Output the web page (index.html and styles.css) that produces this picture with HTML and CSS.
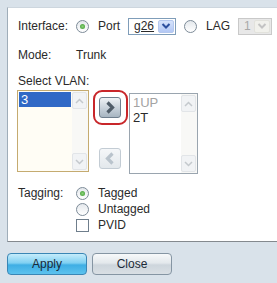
FILE: index.html
```html
<!DOCTYPE html>
<html lang="en">
<head>
  <meta charset="UTF-8">
  <title>Port VLAN Membership</title>
  <link rel="stylesheet" href="styles.css">
</head>
<body>

<div class="panel">
  <div class="row row-iface">
    <span class="label">Interface:</span>
    <span class="radio checked"></span>
    <span class="opt">Port</span>
    <span class="select">
      <span class="select-val"><u>g26</u></span>
      <span class="select-btn">
        <svg width="10" height="8" viewBox="0 0 10 8"><path d="M1.5 2 L5 5.5 L8.5 2" fill="none" stroke="#2c4f9e" stroke-width="2"/></svg>
      </span>
    </span>
    <span class="radio"></span>
    <span class="opt">LAG</span>
    <span class="select disabled">
      <span class="select-val">1</span>
      <span class="select-btn">
        <svg width="10" height="8" viewBox="0 0 10 8"><path d="M1.5 2 L5 5.5 L8.5 2" fill="none" stroke="#c3c3c3" stroke-width="2"/></svg>
      </span>
    </span>
  </div>

  <div class="row row-mode">
    <span class="label">Mode:</span>
    <span>Trunk</span>
  </div>

  <div class="row row-sel">Select VLAN:</div>

  <div class="lists">
    <div class="listbox focus">
      <div class="items">
        <div class="item selected">3</div>
      </div>
      <div class="scroll">
        <span class="sbtn"><svg width="9" height="6" viewBox="0 0 9 6"><path d="M1 5 L4.5 1.5 L8 5" fill="none" stroke="#c4c9cd" stroke-width="1.5"/></svg></span>
        <span class="sbtn"><svg width="9" height="6" viewBox="0 0 9 6"><path d="M1 1 L4.5 4.5 L8 1" fill="none" stroke="#c4c9cd" stroke-width="1.5"/></svg></span>
      </div>
    </div>

    <div class="movers">
      <div class="highlight">
        <span class="move">
          <svg width="10" height="13" viewBox="0 0 10 13"><path d="M2.5 1.5 L7.5 6.5 L2.5 11.5" fill="none" stroke="#4f5c68" stroke-width="3.2"/></svg>
        </span>
      </div>
      <span class="move off">
        <svg width="10" height="13" viewBox="0 0 10 13"><path d="M7.5 1.5 L2.5 6.5 L7.5 11.5" fill="none" stroke="#b9c3cc" stroke-width="3.2"/></svg>
      </span>
    </div>

    <div class="listbox plain">
      <div class="items">
        <div class="item grey">1UP</div>
        <div class="item">2T</div>
      </div>
      <div class="scroll">
        <span class="sbtn"><svg width="9" height="6" viewBox="0 0 9 6"><path d="M1 5 L4.5 1.5 L8 5" fill="none" stroke="#c4c9cd" stroke-width="1.5"/></svg></span>
        <span class="sbtn"><svg width="9" height="6" viewBox="0 0 9 6"><path d="M1 1 L4.5 4.5 L8 1" fill="none" stroke="#c4c9cd" stroke-width="1.5"/></svg></span>
      </div>
    </div>
  </div>

  <div class="tagging">
    <div class="row row-tag">
      <span class="label">Tagging:</span>
      <span class="radio checked"></span>
      <span class="opt">Tagged</span>
    </div>
    <div class="row row-tag">
      <span class="label"></span>
      <span class="radio"></span>
      <span class="opt">Untagged</span>
    </div>
    <div class="row row-tag">
      <span class="label"></span>
      <span class="check"></span>
      <span class="opt">PVID</span>
    </div>
  </div>
</div>

<div class="actions">
  <button class="btn apply">Apply</button>
  <button class="btn close">Close</button>
</div>

</body>
</html>
```

FILE: styles.css
```css
body {
  margin: 0;
  background: #d9e2ea;
  font-family: 'Liberation Sans', Arial, sans-serif;
  font-size: 12px;
  color: #2a2a2a;
}

.panel {
  margin: 7px 0 0 7px;
  height: 235px;
  box-sizing: border-box;
  padding: 8px 0 0 10px;
  background: #fff;
  border-left: 1px solid #9fadb9;
  border-top: 1px solid #cdd6de;
  border-bottom: 1px solid #84898e;
}

.row {
  display: flex;
  align-items: center;
}

.label {
  width: 58px;
  flex: none;
}

.row-iface {
  height: 20px;
}

.row-mode {
  height: 16px;
  margin-top: 11px;
}

.row-sel {
  height: 16px;
  margin-top: 10px;
}

.radio {
  width: 11px;
  height: 11px;
  border: 1px solid #7d8b98;
  border-radius: 50%;
  background: linear-gradient(#e4e8ec, #fff);
  box-sizing: content-box;
  display: flex;
  align-items: center;
  justify-content: center;
  flex: none;
}

.radio.checked::after {
  content: "";
  width: 5px;
  height: 5px;
  border-radius: 50%;
  background: radial-gradient(#8ad07a, #3a9a2c);
}

.check {
  width: 11px;
  height: 11px;
  border: 1px solid #6f7e8c;
  background: #fff;
  flex: none;
}

.opt {
  margin-left: 9px;
  margin-right: 8px;
}

.select {
  display: flex;
  width: 48px;
  height: 17px;
  border: 1px solid #7f9db9;
  box-sizing: border-box;
  background: #fff;
  margin-right: 8px;
}

.select-val {
  flex: 1;
  padding-left: 5px;
  line-height: 15px;
}

.select-btn {
  width: 16px;
  margin: 1px;
  border-radius: 2px;
  background: linear-gradient(#d6e3fb, #b3c8f5);
  border: 1px solid #b5c8ee;
  box-sizing: border-box;
  display: flex;
  align-items: center;
  justify-content: center;
}

.select.disabled {
  width: 34px;
  border-color: #c9c9c9;
  background: #e8e8e8;
  color: #a8a8a8;
  margin-right: 0;
}

.select.disabled .select-btn {
  background: #f1f1ec;
  border-color: #e2e2dc;
}

.lists {
  display: flex;
  align-items: flex-start;
  margin-top: 1px;
  margin-left: -1px;
}

.listbox {
  display: flex;
  height: 82px;
  box-sizing: border-box;
  background: #fff;
}

.listbox.focus {
  width: 72px;
  border: 1px solid #c5ab70;
  background: #fffdf5;
}

.listbox.plain {
  width: 69px;
  height: 81px;
  margin-top: 3px;
  border: 1px solid #9aa5af;
}

.items {
  flex: 1;
  padding: 1px;
}

.item {
  height: 15px;
  line-height: 15px;
  padding-left: 2px;
  font-size: 13px;
}

.item.selected {
  background: #3169c6;
  color: #fff;
}

.item.grey {
  color: #a3a3a3;
}

.scroll {
  width: 15px;
  display: flex;
  flex-direction: column;
  justify-content: space-between;
  background: #f8f8f6;
  padding: 1px 1px 1px 0;
}

.sbtn {
  height: 15px;
  border: 1px solid #e2e5e8;
  border-radius: 2px;
  background: #f1f3f5;
  display: flex;
  align-items: center;
  justify-content: center;
}

.movers {
  width: 40px;
  display: flex;
  flex-direction: column;
  align-items: center;
  padding-left: 2px;
  box-sizing: border-box;
}

.highlight {
  width: 35px;
  height: 35px;
  box-sizing: border-box;
  border: 2px solid #c8262a;
  border-radius: 9px;
  display: flex;
  align-items: center;
  justify-content: center;
}

.move {
  width: 22px;
  height: 21px;
  box-sizing: border-box;
  border: 1px solid #6f7f8e;
  border-radius: 3px;
  background: linear-gradient(#eef2f5, #c6d0d9 55%, #a7b5c1);
  display: flex;
  align-items: center;
  justify-content: center;
}

.move.off {
  margin-top: 23px;
  border-color: #c3ccd4;
  background: linear-gradient(#f5f7f9, #e3e8ec);
}

.tagging {
  margin-top: 11px;
}

.row-tag {
  height: 16px;
  margin-left: 1px;
}

.row-tag .label {
  margin-left: -1px;
}

.actions {
  display: flex;
  gap: 5px;
  margin: 11px 0 0 7px;
}

.btn {
  width: 80px;
  height: 22px;
  font-family: 'Liberation Sans', Arial, sans-serif;
  font-size: 12px;
  color: #1b2a38;
  border-radius: 4px;
  padding: 0;
  cursor: pointer;
}

.apply {
  border: 1px solid #3a86b5;
  background: linear-gradient(#c5ecfb, #7fd0f2 45%, #3eaee4 55%, #5cc2ee);
}

.close {
  border: 1px solid #8595a3;
  background: linear-gradient(#f7f9fa, #e3e8ec 45%, #cdd5dc 55%, #d9dfe4);
}
```
